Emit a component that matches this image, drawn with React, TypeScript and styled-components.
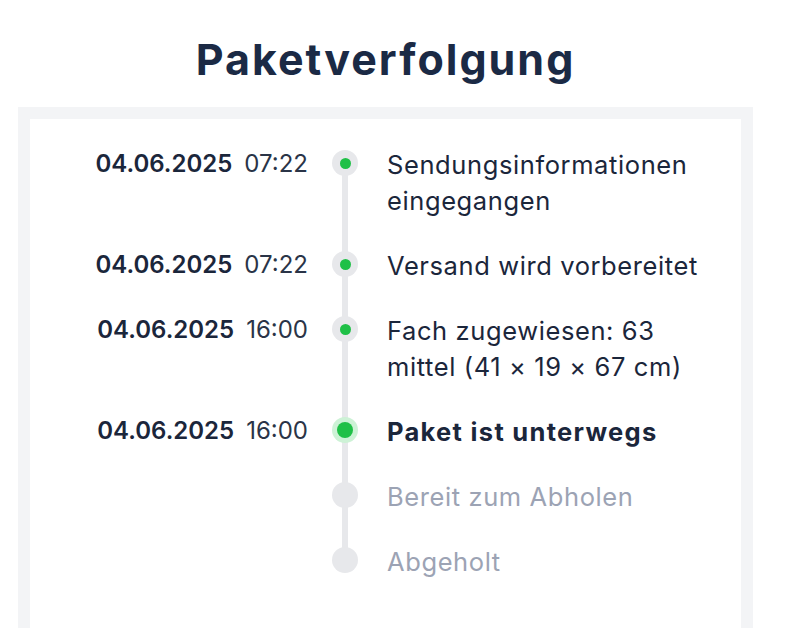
import React from "react";
import styled, { createGlobalStyle, css } from "styled-components";

type Status = "done" | "active" | "pending";

interface TrackingEvent {
  date?: string;
  time?: string;
  label: string[];
  status: Status;
}

const events: TrackingEvent[] = [
  {
    date: "04.06.2025",
    time: "07:22",
    label: ["Sendungsinformationen", "eingegangen"],
    status: "done",
  },
  {
    date: "04.06.2025",
    time: "07:22",
    label: ["Versand wird vorbereitet"],
    status: "done",
  },
  {
    date: "04.06.2025",
    time: "16:00",
    label: ["Fach zugewiesen: 63", "mittel (41 × 19 × 67 cm)"],
    status: "done",
  },
  {
    date: "04.06.2025",
    time: "16:00",
    label: ["Paket ist unterwegs"],
    status: "active",
  },
  { label: ["Bereit zum Abholen"], status: "pending" },
  { label: ["Abgeholt"], status: "pending" },
];

const GlobalStyle = createGlobalStyle`
  html, body {
    margin: 0;
    padding: 0;
    background: #ffffff;
    overflow: hidden;
  }
  body {
    font-family: Inter, "Noto Sans", sans-serif;
    color: #1b263b;
  }
`;

const Page = styled.main`
  width: 735px;
  margin-left: 18px;
  padding-top: 33px;
`;

const Title = styled.h1`
  margin: 0 0 22px;
  text-align: center;
  font-family: Inter, "Noto Sans", sans-serif;
  font-weight: 700;
  font-size: 43px;
  line-height: 52px;
  letter-spacing: 2px;
  color: #1b2a45;
`;

// open at the bottom: the card continues below the fold
const Panel = styled.section`
  border: 12px solid #f3f4f6;
  border-bottom: none;
  padding: 28px 0 48px;
`;

const Timeline = styled.ol`
  list-style: none;
  margin: 0;
  padding: 0;
`;

const Row = styled.li`
  display: grid;
  grid-template-columns: 302px 26px 1fr;
  padding-bottom: 29px;

  &:last-child {
    padding-bottom: 0;
  }
`;

const Stamp = styled.div`
  display: flex;
  justify-content: flex-end;
  align-items: baseline;
  gap: 12px;
  padding-right: 24px;
  font-size: 24px;
  line-height: 36px;
  margin-top: -1px;
  white-space: nowrap;
`;

const DateText = styled.span`
  font-weight: 600;
  color: #1b263b;
`;

const TimeText = styled.span`
  font-weight: 400;
  color: #2a3447;
`;

const Marker = styled.div<{ $last: boolean }>`
  position: relative;
  display: flex;
  justify-content: center;
  align-items: flex-start;

  ${({ $last }) =>
    !$last &&
    css`
      &::after {
        content: "";
        position: absolute;
        left: 10px;
        width: 6px;
        top: 16px;
        bottom: -45px;
        background: #e7e8eb;
        z-index: 0;
      }
    `}
`;

const Dot = styled.span<{ $status: Status }>`
  position: relative;
  z-index: 1;
  margin-top: 3px;
  width: 26px;
  height: 26px;
  border-radius: 50%;
  display: flex;
  align-items: center;
  justify-content: center;
  background: ${({ $status }) => ($status === "active" ? "#cdf2d6" : "#e7e8eb")};

  &::before {
    content: "";
    display: ${({ $status }) => ($status === "pending" ? "none" : "block")};
    width: ${({ $status }) => ($status === "active" ? "16px" : "11px")};
    height: ${({ $status }) => ($status === "active" ? "16px" : "11px")};
    border-radius: 50%;
    background: #1fc047;
  }
`;

const Label = styled.div<{ $status: Status }>`
  padding-left: 29px;
  font-size: 25.5px;
  line-height: 36px;
  letter-spacing: ${({ $status }) => ($status === "active" ? "1.3px" : "0.6px")};
  font-weight: ${({ $status }) => ($status === "active" ? 700 : 400)};
  color: ${({ $status }) => ($status === "pending" ? "#9ca3b4" : "#1b263b")};
`;

export default function App() {
  return (
    <>
      <GlobalStyle />
      <Page>
        <Title>Paketverfolgung</Title>
        <Panel>
          <Timeline>
            {events.map((ev, i) => (
              <Row key={i}>
                <Stamp>
                  {ev.date && <DateText>{ev.date}</DateText>}
                  {ev.time && <TimeText>{ev.time}</TimeText>}
                </Stamp>
                <Marker $last={i === events.length - 1}>
                  <Dot $status={ev.status} />
                </Marker>
                <Label $status={ev.status}>
                  {ev.label.map((line, j) => (
                    <div key={j}>{line}</div>
                  ))}
                </Label>
              </Row>
            ))}
          </Timeline>
        </Panel>
      </Page>
    </>
  );
}
